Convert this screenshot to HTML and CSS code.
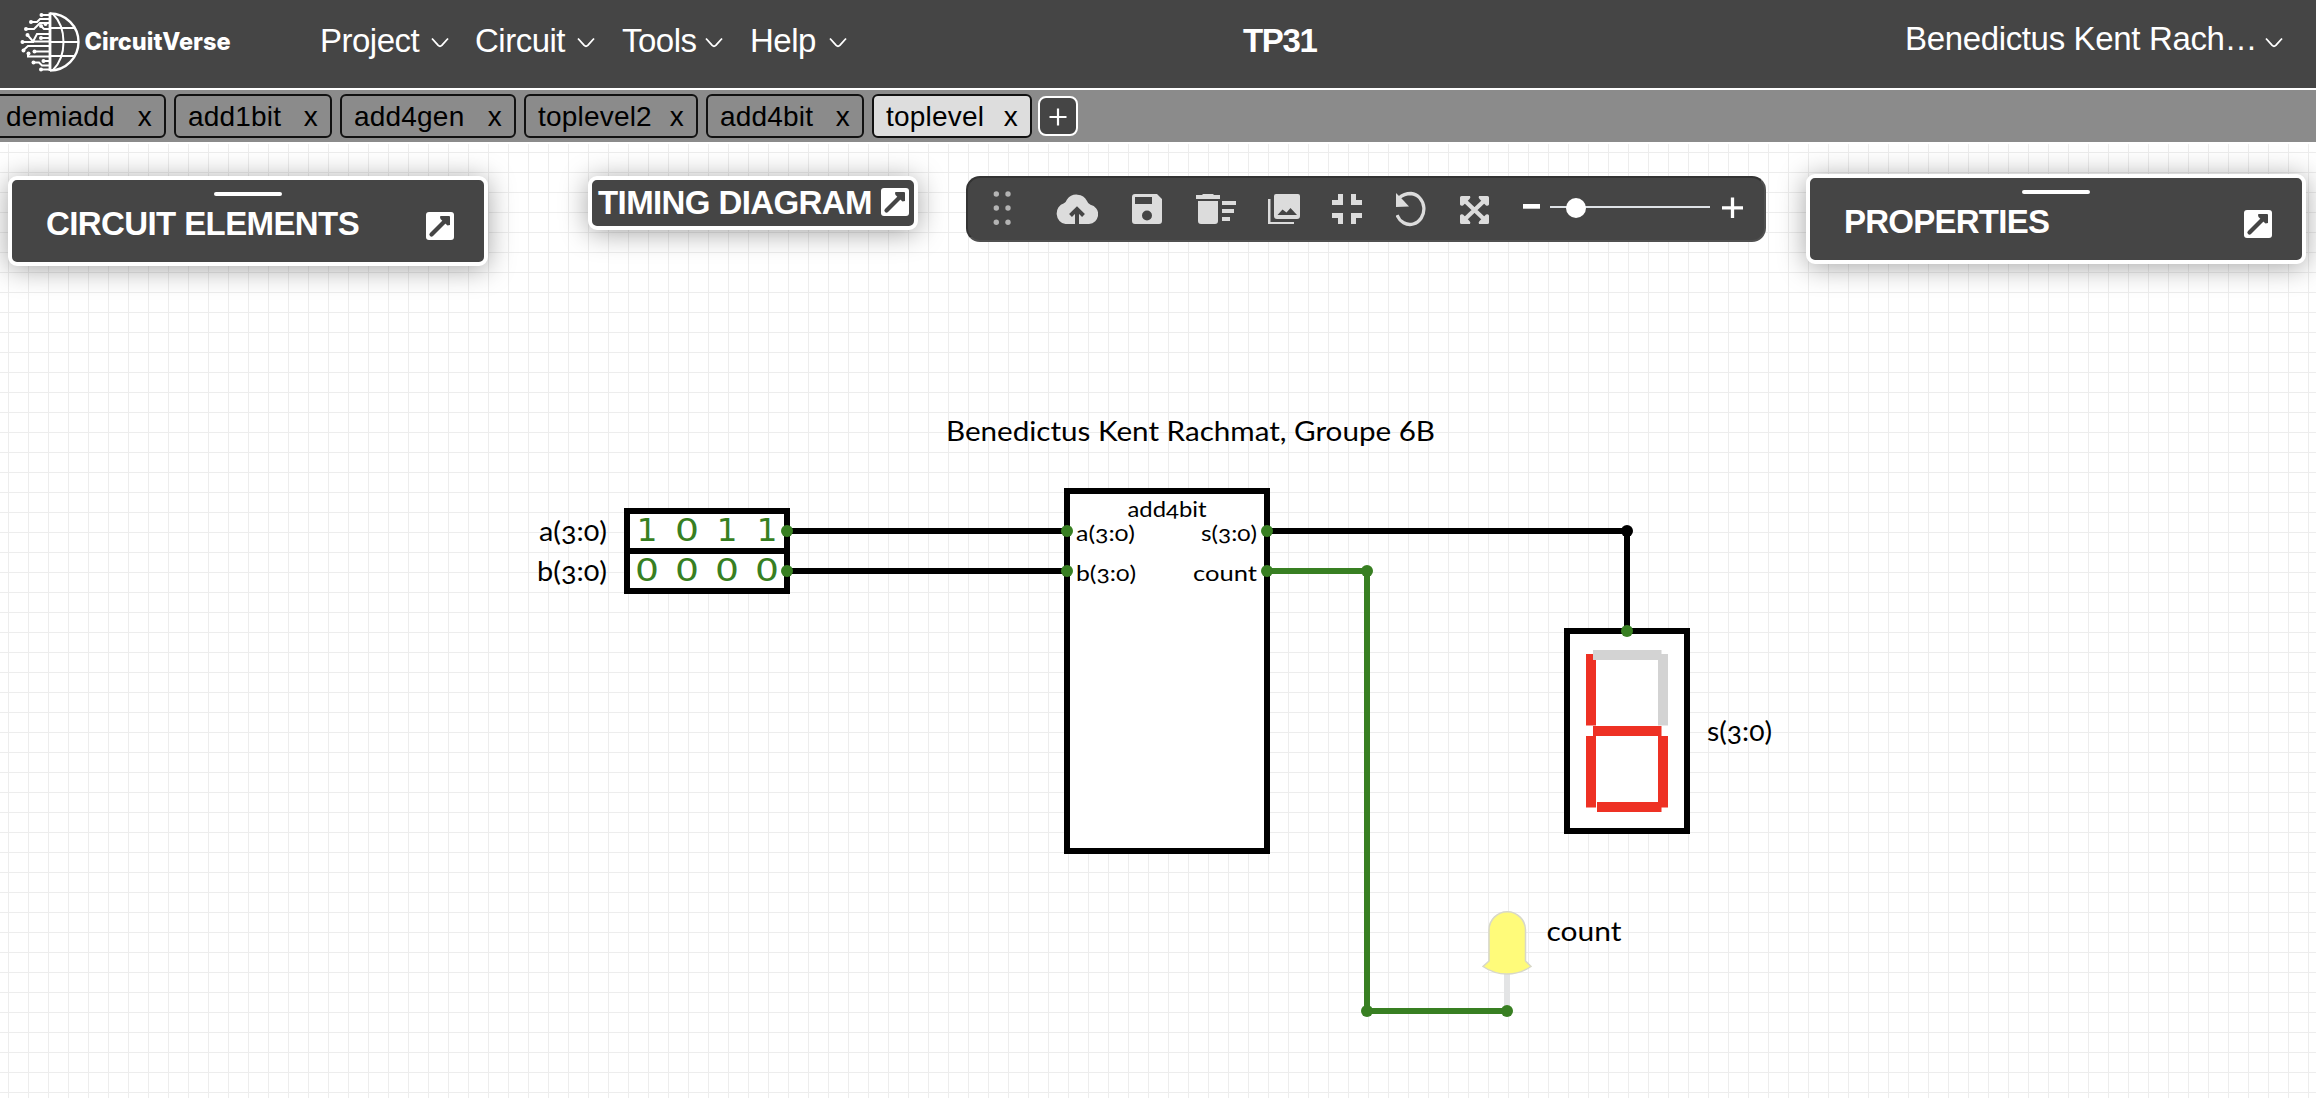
FILE: index.html
```html
<!DOCTYPE html>
<html lang="en">
<head>
<meta charset="utf-8">
<title>TP31 - CircuitVerse</title>
<link rel="stylesheet" href="styles.css">
</head>
<body>
<svg class="defs" aria-hidden="true">
  <symbol id="chevron" viewBox="0 0 18 12"><path d="M1 1.5 7.2 8.4Q9 10 10.8 8.4L17 1.5" fill="none" stroke="#fff" stroke-width="1.8"/></symbol>
  <symbol id="popout" viewBox="0 0 28 28"><rect width="28" height="28" rx="3" fill="#fff"/><path d="M5.500 22.500 18 10" stroke="#454545" stroke-width="4.200" stroke-linecap="round" fill="none"/><path d="M14 5Q14 4 15 4H23Q24 4 24 5V13L21.500 13.500 14.500 7Z" fill="#454545"/></symbol>
</svg>
<header class="navbar">
  <svg class="logo" viewBox="20 8 214 68" role="img" aria-label="CircuitVerse">
    <g fill="none" stroke="#fff" stroke-width="2">
      <path d="M50 12.500V71" stroke-width="2.800"/>
      <path d="M50 13.500A28.500 28.500 0 0 1 50 70.500" stroke-width="2.400"/>
      <path d="M53 14C67 28 67 56 53 70M50 28H75M50 42H78M50 56H75"/>
      <path d="M41.500 15H50M31 22H37L40 19H50M26 29H34L40 23H50M27.500 35 33 41.500H50M33 41.500 37 34H50M22 42H34M23 50.500 28 46H50M28 53V56.500H50M34.500 51.500H50M33.500 62.500H39L42 65.500H50M41 69.500H50M43 61H50M41 38H50M41 26 44 29H50"/>
    </g>
    <g fill="#fff"><circle cx="41.500" cy="15" r="2"/><circle cx="31" cy="22" r="2"/><circle cx="26" cy="29" r="2"/><circle cx="27.500" cy="35" r="2"/><circle cx="22.500" cy="42" r="2"/><circle cx="23.500" cy="50.500" r="2"/><circle cx="28.500" cy="53.500" r="2"/><circle cx="34.500" cy="51.500" r="2"/><circle cx="33.500" cy="62.500" r="2"/><circle cx="41" cy="69.500" r="2"/><circle cx="43.500" cy="61" r="2"/><circle cx="41" cy="38" r="2"/><circle cx="41" cy="26" r="2"/><circle cx="45.500" cy="24" r="2"/></g>
    <text class="wordmark" x="84.500" y="49.500" textLength="146" lengthAdjust="spacingAndGlyphs">CircuitVerse</text>
  </svg>
  <nav class="menu">
    <a class="menu-project">Project<svg class="chevron"><use href="#chevron"/></svg></a>
    <a class="menu-circuit">Circuit<svg class="chevron"><use href="#chevron"/></svg></a>
    <a class="menu-tools">Tools<svg class="chevron"><use href="#chevron"/></svg></a>
    <a class="menu-help">Help<svg class="chevron"><use href="#chevron"/></svg></a>
  </nav>
  <h1 class="project-title">TP31</h1>
  <div class="account"><span class="account-name">Benedictus Kent Rach…</span><svg class="chevron"><use href="#chevron"/></svg></div>
</header>
<div class="tabs">
  <div class="tab tab-cut"><span>demiadd</span><span>x</span></div>
  <div class="tab tab-md"><span>add1bit</span><span>x</span></div>
  <div class="tab tab-lg"><span>add4gen</span><span>x</span></div>
  <div class="tab tab-xl"><span>toplevel2</span><span>x</span></div>
  <div class="tab tab-md"><span>add4bit</span><span>x</span></div>
  <div class="tab tab-active"><span>toplevel</span><span>x</span></div>
  <button class="tab-add" aria-label="New circuit"><svg viewBox="0 0 18 18"><path d="M9 .5V17.500M.5 9H17.500" stroke="#fff" stroke-width="2.200"/></svg></button>
</div>
<main class="workspace">
  <svg class="circuit" viewBox="0 142 2316 956">
    <defs><pattern id="grid" x="8" y="152" width="20" height="20" patternUnits="userSpaceOnUse"><path d="M0 0H20V1H1V20H0Z" fill="#ededed"/></pattern></defs>
    <rect x="0" y="144" width="2316" height="954" fill="url(#grid)"/>
    <g class="part"><rect x="627" y="511" width="160" height="40"/><rect x="627" y="551" width="160" height="40"/><rect x="1067" y="491" width="200" height="360"/><rect x="1567" y="631" width="120" height="200"/></g>
    <g class="bits">
      <text x="647" y="541.300">1</text><text x="675" y="541.300" textLength="24" lengthAdjust="spacingAndGlyphs" class="zero">0</text><text x="727" y="541.300">1</text><text x="767" y="541.300">1</text>
      <text x="635" y="581.300" textLength="24" lengthAdjust="spacingAndGlyphs" class="zero">0</text><text x="675" y="581.300" textLength="24" lengthAdjust="spacingAndGlyphs" class="zero">0</text><text x="715" y="581.300" textLength="24" lengthAdjust="spacingAndGlyphs" class="zero">0</text><text x="755" y="581.300" textLength="24" lengthAdjust="spacingAndGlyphs" class="zero">0</text>
    </g>
    <path class="wire" d="M787 531H1067M787 571H1067M1267 531H1627V631"/>
    <path class="wire live" d="M1267 571H1367V1011H1507"/>
    <path d="M1507 970V1006" stroke="#e3e4e5" stroke-width="6"/>
    <path d="M1489 961V930A18.200 18.200 0 0 1 1525.500 930V961L1531 966.500Q1520 974 1507 974Q1494 974 1483 966.500Z" fill="#fffb7a" stroke="#d8d8c8" stroke-width="1.500"/>
    <circle cx="1627" cy="531" r="6"/>
    <g fill="#387f22"><circle cx="787" cy="531" r="6"/><circle cx="787" cy="571" r="6"/><circle cx="1067" cy="531" r="6"/><circle cx="1067" cy="571" r="6"/><circle cx="1267" cy="531" r="6"/><circle cx="1267" cy="571" r="6"/><circle cx="1367" cy="571" r="6"/><circle cx="1367" cy="1011" r="6"/><circle cx="1507" cy="1011" r="6"/><circle cx="1627" cy="631" r="6"/></g>
    <g fill="#ee3124"><rect x="1586" y="654" width="10" height="71.500"/><rect x="1593" y="726" width="68.500" height="10"/><rect x="1586" y="736" width="10" height="71.500"/><rect x="1658" y="736" width="10" height="71.500"/><rect x="1597" y="802" width="64.500" height="10"/></g>
    <g fill="#d3d3d3"><rect x="1593" y="650" width="68.500" height="10"/><rect x="1658" y="654" width="10" height="71.500"/></g>
    <g class="label">
      <text x="946" y="441" textLength="489" lengthAdjust="spacingAndGlyphs">Benedictus Kent Rachmat, Groupe 6B</text>
      <text x="539" y="541" textLength="68" lengthAdjust="spacingAndGlyphs">a(3:0)</text>
      <text x="537" y="581" textLength="70" lengthAdjust="spacingAndGlyphs">b(3:0)</text>
      <text x="1707" y="741" textLength="65" lengthAdjust="spacingAndGlyphs">s(3:0)</text>
      <text x="1546.500" y="941" textLength="75" lengthAdjust="spacingAndGlyphs">count</text>
    </g>
    <g class="label pin">
      <text x="1127.500" y="517" textLength="79" lengthAdjust="spacingAndGlyphs">add4bit</text>
      <text x="1076" y="541" textLength="59" lengthAdjust="spacingAndGlyphs">a(3:0)</text>
      <text x="1076" y="581" textLength="60" lengthAdjust="spacingAndGlyphs">b(3:0)</text>
      <text x="1201" y="541" textLength="56" lengthAdjust="spacingAndGlyphs">s(3:0)</text>
      <text x="1193" y="581" textLength="64" lengthAdjust="spacingAndGlyphs">count</text>
    </g>
  </svg>
  <div class="floating">
    <section class="panel elements">
      <i class="handle"></i>
      <div class="panel-row"><h2>CIRCUIT ELEMENTS</h2><svg class="popout"><use href="#popout"/></svg></div>
    </section>
    <section class="panel timing"><h2>TIMING DIAGRAM</h2><svg class="popout"><use href="#popout"/></svg></section>
    <section class="toolbar">
      <svg class="dots" viewBox="0 0 18 40" width="18" height="40" fill="#b4b4b4"><circle cx="3.300" cy="5" r="2.700"/><circle cx="15" cy="5" r="2.700"/><circle cx="3.300" cy="19" r="2.700"/><circle cx="15" cy="19" r="2.700"/><circle cx="3.300" cy="33.300" r="2.700"/><circle cx="15" cy="33.300" r="2.700"/></svg>
      <svg class="cloud" viewBox="0 0 42 40" width="42" height="40"><path d="M9.500 35A9.500 10.500 0 0 1 8 14.300Q10 13 11 10.500A11.500 11 0 0 1 31 12Q32 15 34.500 15.700A10 9.800 0 0 1 33 35Z"/><path d="M21 36V20.500M14.500 26.500 21 20 27.500 26.500" fill="none" stroke="#454545" stroke-width="4"/></svg>
      <svg class="save" viewBox="0 0 30 40" width="30" height="40"><path d="M3 5H25L30 10V32Q30 35 27 35H3Q0 35 0 32V8Q0 5 3 5ZM3 8V15H20V8ZM15 21.500A5 5 0 1 0 15 31.500 5 5 0 0 0 15 21.500Z" fill-rule="evenodd"/></svg>
      <svg class="trash" viewBox="0 0 40 40" width="40" height="40"><path d="M0 6H6L7 5H17L18 6H24V10H0ZM2 12H22V32Q22 35 19 35H5Q2 35 2 32ZM26 12H40V16H26ZM26 20H38V24H26ZM26 28H34V32H26Z"/></svg>
      <svg class="gallery" viewBox="0 0 32 40" width="32" height="40"><path d="M8 5H30Q32 5 32 7V27Q32 30 29 30H9Q6 30 6 27V7Q6 5 8 5ZM9.500 26H29L22.500 19 18.500 23.500 14.500 20.500Z" fill-rule="evenodd"/><path d="M0 10H2.500V33H26V35H0Z"/></svg>
      <svg class="compress" viewBox="0 0 30 40" width="30" height="40"><path d="M6 5H11V16H0V11H6ZM19 5H24V11H30V16H19ZM0 24H11V35H6V29H0ZM19 24H30V29H24V35H19Z"/></svg>
      <svg class="undo" viewBox="0 0 30 40" width="30" height="40"><path d="M3 9Q8 4.500 15 4.500A14 15.500 0 1 1 1 26" fill="none" stroke="#dcdcdc" stroke-width="3.300"/><path d="M0 4 5 9 7 11 13 17.500 0 18Z"/></svg>
      <svg class="expand" viewBox="0 0 29 40" width="29" height="40"><path d="M4 11 25 31M25 11 4 31" fill="none" stroke="#dcdcdc" stroke-width="4.200"/><path d="M1.500 7H10Q11 8.500 9.500 10L3 16.500Q1 17.500 0 15.500V8.500Q0 7 1.500 7ZM27.500 7H19Q18 8.500 19.500 10L26 16.500Q28 17.500 29 15.500V8.500Q29 7 27.500 7ZM1.500 35H10Q11 33.500 9.500 32L3 25.500Q1 24.500 0 26.500V33.500Q0 35 1.500 35ZM27.500 35H19Q18 33.500 19.500 32L26 25.500Q28 24.500 29 26.500V33.500Q29 35 27.500 35Z"/></svg>
      <svg class="zoom" viewBox="0 0 220 40" width="220" height="40"><rect x="0" y="15" width="17" height="4.700" fill="#fff"/><rect x="27" y="17" width="160" height="2" fill="#dee2e6"/><circle cx="53" cy="19" r="10" fill="#fff"/><path d="M199 18.800H220M209.500 8.500V29" stroke="#fff" stroke-width="3.300"/></svg>
    </section>
    <section class="panel properties">
      <i class="handle"></i>
      <div class="panel-row"><h2>PROPERTIES</h2><svg class="popout"><use href="#popout"/></svg></div>
    </section>
  </div>
</main>
</body>
</html>
```
FILE: styles.css
```css
* { box-sizing: border-box; }
body { margin: 0; width: 2316px; height: 1098px; overflow: hidden; background: #fff; font-family: "Liberation Sans", Arial, sans-serif; }
.defs { display: none; }
h1, h2 { margin: 0; white-space: nowrap; }

.navbar { display: flex; height: 90px; background: #454545; border-bottom: 2px solid #fff; color: #fff; font-size: 33px; line-height: 38px; }
.logo { width: 214px; height: 68px; margin: 8px 0 0 20px; flex: none; }
.wordmark { font: 800 24px Inter, sans-serif; fill: #fff; }
.menu { display: flex; margin: 22px 0 0 86px; letter-spacing: -0.5px; }
.menu a { display: flex; justify-content: space-between; flex: none; }
.menu-project { width: 129px; }
.menu-circuit { width: 120px; margin-left: 26px; }
.menu-tools { width: 101px; margin-left: 27px; }
.menu-help { width: 97px; margin-left: 27px; }
.chevron { width: 18px; height: 12px; margin-top: 15px; flex: none; }
.project-title { margin: 22px 0 0 396px; width: 72px; font-size: 33px; line-height: 38px; letter-spacing: -1.3px; }
.account { display: flex; justify-content: space-between; width: 378px; margin: 20px 0 0 590px; }
.account .chevron { margin-top: 17px; }
.account-name { letter-spacing: -0.35px; white-space: nowrap; }

.tabs { display: flex; gap: 8px; height: 52px; padding-top: 4px; background: #8b8b8b; font-size: 28px; }
.tab { display: flex; justify-content: space-between; height: 44px; padding: 0 12px; border: 2px solid #111; border-radius: 6px; line-height: 41px; letter-spacing: 0.2px; color: #000; flex: none; }
.tab-cut { width: 174px; margin-left: -8px; }
.tab-md { width: 158px; }
.tab-lg { width: 176px; }
.tab-xl { width: 174px; }
.tab-active { width: 160px; background: #ddd; }
.tab-add { width: 40px; height: 40px; margin: 2px 0 0 -2px; padding: 2px 0 0; border: 2px solid #fff; border-radius: 8px; background: #454545; display: flex; align-items: center; justify-content: center; }
.tab-add svg { width: 18px; height: 18px; }

.workspace { position: relative; height: 956px; }
.circuit { display: block; width: 2316px; height: 956px; }
.part { fill: #fff; stroke: #000; stroke-width: 6; }
.wire { fill: none; stroke: #000; stroke-width: 6; }
.live { stroke: #387f22; }
.bits { font: 32.5px "DejaVu Sans", sans-serif; fill: #387f22; text-anchor: middle; }
.zero { text-anchor: start; }
.label { font: 27px Lato, sans-serif; font-variant-numeric: oldstyle-nums; }
.label text:first-child { font-variant-numeric: normal; }
.pin { font-size: 22px; }
.pin text:first-child { font-variant-numeric: oldstyle-nums; }

.floating { position: absolute; top: 0; left: 0; display: flex; align-items: flex-start; padding: 34px 0 0 8px; }
.panel { background: #454545; border: 4px solid #fff; border-radius: 9px; box-shadow: 0 3px 28px rgba(0, 0, 0, 0.36); color: #fff; flex: none; }
.panel h2 { font-size: 33px; line-height: 38px; }
.handle { display: block; width: 68px; height: 4px; margin: 12px 0 0 169px; border-radius: 2px; background: #fff; }
.panel-row { display: flex; justify-content: space-between; margin-top: 9px; }
.popout { width: 28px; height: 28px; flex: none; }
.elements { width: 480px; height: 90px; padding: 0 30px 0 33px; }
.elements h2 { letter-spacing: -0.6px; margin-left: 1px; }
.elements .popout, .properties .popout { margin-top: 7px; }
.timing { display: flex; justify-content: space-between; width: 330px; height: 54px; margin-left: 100px; padding: 4px 5px 0 6px; }
.timing h2 { letter-spacing: -0.6px; }
.timing .popout { margin-top: 4px; }
.toolbar { display: flex; width: 800px; height: 66px; margin-left: 48px; padding: 11px 0 0 25px; border: 2px solid; border-color: #333 #505050 #505050 #333; border-radius: 14px; background: #454545; flex: none; fill: #dcdcdc; }
.toolbar svg { flex: none; }
.cloud { margin-left: 45px; }
.save { margin-left: 34px; }
.trash { margin-left: 34px; }
.gallery { margin-left: 32px; }
.compress { margin-left: 32px; }
.undo { margin-left: 34px; }
.expand { margin-left: 34px; }
.zoom { margin-left: 34px; }
.properties { width: 500px; height: 90px; margin: -2px 0 0 40px; padding: 0 30px 0 34px; }
.properties .handle { margin-left: 178px; }
.properties h2 { letter-spacing: -0.75px; }
```
